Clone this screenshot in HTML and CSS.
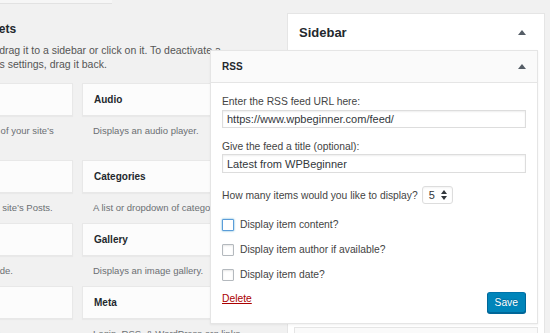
FILE: index.html
```html
<!DOCTYPE html>
<html lang="en">
<head>
<meta charset="utf-8">
<title>Widgets</title>
<link rel="stylesheet" href="styles.css">
</head>
<body>
<div class="wrap">
  <section class="available">
    <div class="top-strip"></div>
    <h2 class="avail-title">Available Widgets</h2>
    <p class="avail-desc">To activate a widget drag it to a sidebar or click on it. To deactivate a<br>widget and delete its settings, drag it back.</p>
    <div class="widget-grid">
      <div class="widget"><div class="widget-card">Archives</div><p class="widget-desc">A monthly archive of your site’s<br>Posts.</p></div>
      <div class="widget"><div class="widget-card">Audio</div><p class="widget-desc">Displays an audio player.</p></div>
      <div class="widget"><div class="widget-card">Calendar</div><p class="widget-desc">A calendar of your site’s Posts.</p></div>
      <div class="widget"><div class="widget-card">Categories</div><p class="widget-desc">A list or dropdown of categories.</p></div>
      <div class="widget"><div class="widget-card">Custom HTML</div><p class="widget-desc">Arbitrary HTML code.</p></div>
      <div class="widget"><div class="widget-card">Gallery</div><p class="widget-desc">Displays an image gallery.</p></div>
      <div class="widget"><div class="widget-card">Image</div><p class="widget-desc">Displays an image.</p></div>
      <div class="widget"><div class="widget-card">Meta</div><p class="widget-desc">Login, RSS, &amp; WordPress.org links.</p></div>
    </div>
  </section>

  <section class="sidebar">
    <div class="sidebar-head">
      <h2 class="sidebar-title">Sidebar</h2>
      <svg class="arrow" width="8" height="5" viewBox="0 0 8 5"><polygon points="0,5 4,0 8,5" fill="#555d66"/></svg>
    </div>
    <div class="sortables">
      <div class="rss-widget">
        <div class="rss-head">
          <h3 class="rss-title">RSS</h3>
          <svg class="arrow" width="8" height="5" viewBox="0 0 8 5"><polygon points="0,5 4,0 8,5" fill="#555d66"/></svg>
        </div>
        <div class="rss-body">
          <div class="field first">
            <label class="field-label">Enter the RSS feed URL here:</label>
            <input class="text-input" type="text" value="https://www.wpbeginner.com/feed/">
          </div>
          <div class="field second">
            <label class="field-label">Give the feed a title (optional):</label>
            <input class="text-input tall" type="text" value="Latest from WPBeginner">
          </div>
          <div class="count-row">
            <span>How many items would you like to display?</span>
            <span class="fake-select">5
              <svg class="spin" width="6" height="10" viewBox="0 0 6 10"><polygon points="0,4 3,0 6,4" fill="#32373c"/><polygon points="0,6 6,6 3,10" fill="#32373c"/></svg>
            </span>
          </div>
          <div class="checks">
            <label class="check-row"><input class="check focused" type="checkbox">Display item content?</label>
            <label class="check-row"><input class="check" type="checkbox">Display item author if available?</label>
            <label class="check-row"><input class="check" type="checkbox">Display item date?</label>
          </div>
          <div class="actions">
            <a class="delete" href="#">Delete</a>
            <button class="save" type="button">Save</button>
          </div>
        </div>
      </div>
      <div class="next-widget"></div>
    </div>
  </section>
</div>
</body>
</html>
```

FILE: styles.css
```css
html, body {
  margin: 0;
  padding: 0;
  background: #f1f1f1;
  overflow: hidden;
  width: 550px;
  height: 333px;
}

body {
  font-family: "Liberation Sans", Arial, sans-serif;
  color: #444;
}

.wrap {
  display: flex;
  align-items: flex-start;
  margin-left: -97px;
  gap: 20px;
  height: 333px;
  overflow: hidden;
}

/* left: available widgets */
.available {
  flex: 0 0 364px;
}

.top-strip {
  width: 209px;
  height: 3px;
  background: #f6f6f6;
  border-bottom: 1px solid #e2e2e2;
}

.avail-title {
  margin: 17px 0 0;
  padding-left: 11px;
  font-size: 12px;
  line-height: 16px;
  font-weight: 700;
  color: #23282d;
}

.avail-desc {
  margin: 6px 0 0;
  padding-left: 6px;
  text-indent: -5px;
  font-size: 10.5px;
  line-height: 14px;
  color: #555;
  white-space: nowrap;
}

.widget-grid {
  margin-top: 12px;
  padding-left: 9px;
  display: grid;
  grid-template-columns: 161px 161px;
  column-gap: 9px;
}

.widget-card {
  box-sizing: border-box;
  height: 33px;
  background: #fcfcfc;
  border: 1px solid #e8e8e8;
  box-shadow: 0 1px 1px rgba(0,0,0,0.03);
  padding: 0 11px;
  font-size: 10px;
  line-height: 31px;
  font-weight: 700;
  color: #23282d;
}

.widget-desc {
  margin: 8px 0;
  padding: 0 11px;
  font-size: 9.5px;
  line-height: 14px;
  color: #6b6f73;
  white-space: nowrap;
}

/* right: sidebar */
.sidebar {
  flex: 0 0 258px;
  box-sizing: border-box;
  margin-top: 13px;
  background: #fff;
  border: 1px solid #e5e5e5;
  border-bottom: 0;
  height: 320px;
}

.sidebar-head {
  height: 36px;
  display: flex;
  align-items: center;
  justify-content: space-between;
  padding: 0 18px 0 11px;
}

.sidebar-title {
  margin: 0;
  font-size: 13px;
  font-weight: 700;
  color: #23282d;
}

.arrow {
  display: block;
}

.sortables {
  padding: 0 6px;
}

.rss-widget {
  position: relative;
  z-index: 1;
  margin-left: -84px;
  background: #fff;
  border: 1px solid #e5e5e5;
  box-shadow: 0 1px 2px rgba(0,0,0,0.06);
}

.rss-head {
  height: 31px;
  background: #fafafa;
  border-bottom: 1px solid #e5e5e5;
  display: flex;
  align-items: center;
  justify-content: space-between;
  padding: 0 11px 0 11px;
}

.rss-title {
  margin: 0;
  font-size: 10px;
  font-weight: 700;
  color: #23282d;
}

.rss-body {
  padding: 12px 11px 10px;
  font-size: 10.3px;
  color: #444;
}

.field {
  display: flex;
  flex-direction: column;
}

.field.second {
  margin-top: 12px;
}

.field-label {
  line-height: 13px;
}

.text-input {
  box-sizing: border-box;
  margin: 2px 0 0;
  height: 18px;
  width: 100%;
  border: 1px solid #ddd;
  box-shadow: inset 0 1px 2px rgba(0,0,0,0.07);
  background: #fff;
  padding: 0 4px;
  font-family: "Liberation Sans", Arial, sans-serif;
  font-size: 11px;
  color: #32373c;
  outline: none;
}

.text-input.tall {
  height: 19px;
  margin-top: 1px;
}

.count-row {
  margin-top: 13px;
  display: flex;
  align-items: center;
  height: 18px;
}

.fake-select {
  box-sizing: border-box;
  margin-left: 4px;
  width: 31px;
  height: 18px;
  border: 1px solid #ddd;
  border-radius: 3px;
  box-shadow: inset 0 1px 2px rgba(0,0,0,0.05);
  display: flex;
  align-items: center;
  justify-content: space-between;
  padding: 0 5px 0 6px;
  font-size: 11px;
  color: #32373c;
}

.spin {
  display: block;
}

.checks {
  margin-top: 8px;
}

.check-row {
  display: flex;
  align-items: center;
  height: 25px;
}

.check {
  -webkit-appearance: none;
  appearance: none;
  box-sizing: border-box;
  width: 12px;
  height: 12px;
  margin: 0 6px 0 0;
  border: 1px solid #b4b9be;
  border-radius: 1px;
  background: #fff;
  box-shadow: inset 0 1px 2px rgba(0,0,0,0.1);
}

.check.focused {
  border-color: #5b9dd9;
  box-shadow: 0 0 2px rgba(30,140,190,0.8);
}

.actions {
  margin-top: 5px;
  display: flex;
  justify-content: space-between;
  align-items: flex-start;
}

.delete {
  color: #a00;
  text-decoration: underline;
  line-height: 13px;
}

.save {
  box-sizing: border-box;
  height: 21px;
  padding: 0 7px;
  background: #0085ba;
  border: 1px solid #0073aa;
  border-color: #0073aa #006799 #006799;
  border-radius: 3px;
  box-shadow: 0 1px 0 #006799;
  color: #fff;
  font-family: "Liberation Sans", Arial, sans-serif;
  font-size: 10.3px;
  text-shadow: 0 -1px 1px #006799;
}

.next-widget {
  margin-top: 3px;
  height: 6px;
  border-top: 1px solid #e5e5e5;
  border-left: 1px solid #e5e5e5;
  border-right: 1px solid #e5e5e5;
  background: #fafafa;
}
```
